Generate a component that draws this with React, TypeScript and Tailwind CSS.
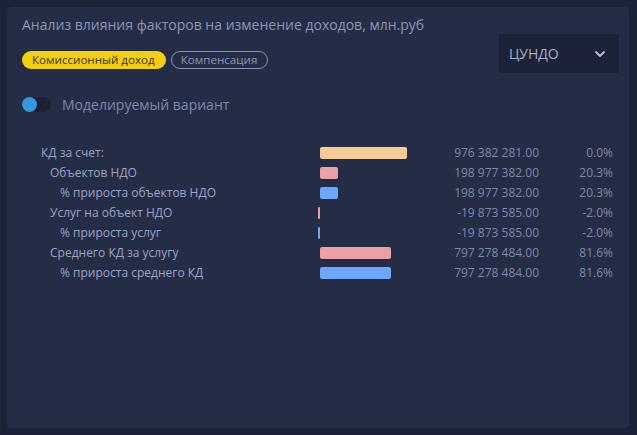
import { ChevronDown } from 'lucide-react'

type Row = {
  label: string
  level: number
  pct: number
  value: string
  share: string
  color: string
}

const rows: Row[] = [
  { label: 'КД за счет:', level: 0, pct: 100, value: '976 382 281.00', share: '0.0%', color: 'bg-[#f6cb95]' },
  { label: 'Объектов НДО', level: 1, pct: 20.3, value: '198 977 382.00', share: '20.3%', color: 'bg-[#eca0a5]' },
  { label: '% прироста объектов НДО', level: 2, pct: 20.3, value: '198 977 382.00', share: '20.3%', color: 'bg-[#6ea8fe]' },
  { label: 'Услуг на объект НДО', level: 1, pct: -2, value: '-19 873 585.00', share: '-2.0%', color: 'bg-[#eca0a5]' },
  { label: '% прироста услуг', level: 2, pct: -2, value: '-19 873 585.00', share: '-2.0%', color: 'bg-[#6ea8fe]' },
  { label: 'Среднего КД за услугу', level: 1, pct: 81.6, value: '797 278 484.00', share: '81.6%', color: 'bg-[#eca0a5]' },
  { label: '% прироста среднего КД', level: 2, pct: 81.6, value: '797 278 484.00', share: '81.6%', color: 'bg-[#6ea8fe]' },
]

const indent = ['pl-0', 'pl-[9px]', 'pl-[19px]']

const App = () => {
  return (
    <div
      className="h-[435px] w-[637px] bg-[#1c2237] pl-[7px] pr-[8px] pt-[7px] pb-[7px]"
      style={{ fontFamily: '"Open Sans", "Noto Sans", sans-serif' }}
    >
      <div className="flex h-full flex-col rounded-[4px] bg-[#252c46] pl-[15px] pr-[10px] pt-[8px]">
        <div className="flex justify-between">
          <div className="flex flex-col">
            <div className="text-[14px] leading-[20px] text-[#8c96b9]">
              Анализ влияния факторов на изменение доходов, млн.руб
            </div>
            <div className="mt-[16px] flex gap-[5px]">
              <span className="flex h-[18px] items-center rounded-full bg-[#f3cf0f] pl-[10px] pr-[11px] text-[11.6px] text-[#3a3520]">
                Комиссионный доход
              </span>
              <span className="flex h-[18px] items-center rounded-full border border-[#8a93b1] pl-[9px] pr-[10px] text-[11.6px] text-[#8c96b9]">
                Компенсация
              </span>
            </div>
            <div className="mt-[25px] flex h-[20px] items-center gap-[11px]">
              <div className="flex h-[15px] w-[29px] items-center rounded-full bg-[#1b2035]">
                <div className="h-[15px] w-[15px] rounded-full bg-[#3598dc]" />
              </div>
              <span className="text-[14px] text-[#7f89ab]">Моделируемый вариант</span>
            </div>
          </div>
          <div className="mt-[19px] flex h-[39px] w-[120px] items-center justify-between bg-[#1c2237] pl-[10px] pr-[11px]">
            <span className="text-[14px] text-[#a8aec6]">ЦУНДО</span>
            <ChevronDown size={16} strokeWidth={2.75} className="text-[#b9bfd2]" />
          </div>
        </div>

        <div className="mt-[29px] ml-[19px] grid grid-cols-[279px_100px_119px_74px] text-[12px] leading-[20px]">
          {rows.map((r) => (
            <div key={r.label} className="contents">
              <div className={`${indent[r.level]} text-[#9ba4c4]`}>{r.label}</div>
              <div className="flex items-center">
                <div
                  className={`h-[12px] rounded-[2px] ${r.color}`}
                  style={{
                    width: `${Math.max(Math.abs(r.pct) * 0.87, 2)}px`,
                    marginLeft: r.pct < 0 ? `-${Math.max(Math.abs(r.pct) * 0.87, 2)}px` : 0,
                  }}
                />
              </div>
              <div className="text-right text-[#7f89ab]">{r.value}</div>
              <div className="text-right text-[#7f89ab]">{r.share}</div>
            </div>
          ))}
        </div>
      </div>
    </div>
  )
}

export default App
